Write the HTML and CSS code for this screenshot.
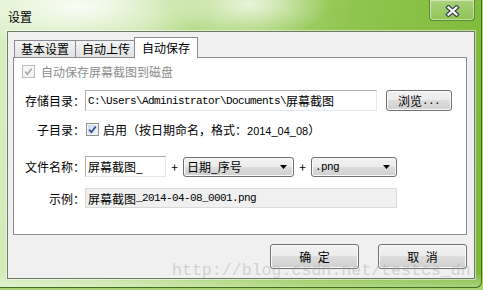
FILE: index.html
```html
<!DOCTYPE html>
<html lang="zh-CN">
<head>
    <meta charset="UTF-8">
    <title>设置</title>
    <link rel="stylesheet" href="styles.css">
</head>
<body>

    <div class="window">
        <div class="titlebar">
            <span class="title">设置</span>
            <div class="close">
                <svg width="15" height="12" viewBox="0 0 15 12">
                    <path d="M3.5 2.5 L11.5 9.5 M11.5 2.5 L3.5 9.5" stroke="#3c4a4f" stroke-width="4.6" stroke-linecap="square" fill="none"/>
                    <path d="M3.5 2.5 L11.5 9.5 M11.5 2.5 L3.5 9.5" stroke="#ffffff" stroke-width="2.2" stroke-linecap="square" fill="none"/>
                </svg>
            </div>
        </div>

        <div class="client">
            <div class="tabs">
                <div class="tab">基本设置</div>
                <div class="tab">自动上传</div>
                <div class="tab active">自动保存</div>
            </div>

            <div class="panel">
                <div class="row row-check disabled">
                    <span class="check">
                        <svg width="9" height="9" viewBox="0 0 9 9"><path d="M1.2 4.6 L3.4 7.2 L7.8 1.4" stroke="#a9a9a9" stroke-width="1.6" fill="none"/></svg>
                    </span>
                    <span>自动保存屏幕截图到磁盘</span>
                </div>

                <div class="row row-dir">
                    <span class="label">存储目录：</span>
                    <div class="field path"><span class="mono">C:\Users\Administrator\Documents\</span>屏幕截图</div>
                    <div class="btn browse">浏览<span class="mono">...</span></div>
                </div>

                <div class="row row-sub">
                    <span class="label">子目录：</span>
                    <span class="check on">
                        <svg width="9" height="9" viewBox="0 0 9 9"><path d="M1.2 4.6 L3.4 7.2 L7.8 1.4" stroke="#2b4c96" stroke-width="1.7" fill="none"/></svg>
                    </span>
                    <span class="sub-text">启用（按日期命名，格式：<span class="num">2014_04_08</span>）</span>
                </div>

                <div class="row row-name">
                    <span class="label">文件名称：</span>
                    <div class="field name">屏幕截图_</div>
                    <span class="plus">+</span>
                    <div class="combo date">
                        <span>日期_序号</span>
                        <svg class="arrow" width="7" height="4" viewBox="0 0 7 4"><polygon points="0,0 7,0 3.5,4" fill="#000"/></svg>
                    </div>
                    <span class="plus">+</span>
                    <div class="combo ext">
                        <span class="mono">.png</span>
                        <svg class="arrow" width="7" height="4" viewBox="0 0 7 4"><polygon points="0,0 7,0 3.5,4" fill="#000"/></svg>
                    </div>
                </div>

                <div class="row row-example">
                    <span class="label">示例：</span>
                    <div class="field example">屏幕截图<span class="mono">_2014-04-08_0001.png</span></div>
                </div>
            </div>

            <div class="actions">
                <div class="btn wide">确 定</div>
                <div class="btn wide">取 消</div>
            </div>
        </div>

        <div class="watermark">http://blog.csdn.net/testcs_dn</div>
    </div>

</body>
</html>
```

FILE: styles.css
```css
html, body {
    margin: 0;
    padding: 0;
}

body {
    width: 483px;
    height: 290px;
    overflow: hidden;
    background: #a9d36f;
    font-family: "Noto Sans CJK SC", sans-serif;
    font-size: 12px;
    color: #000000;
}

.window {
    position: relative;
    width: 482px;
    height: 288px;
    box-sizing: border-box;
    border-right: 1px solid #41701f;
    border-bottom: 1px solid #41701f;
    border-bottom-right-radius: 6px;
    background:
        radial-gradient(ellipse 130px 45px at 80px 6px, rgba(255, 255, 255, 0.9), rgba(255, 255, 255, 0)),
        radial-gradient(ellipse 80px 35px at 250px 4px, rgba(255, 255, 255, 0.75), rgba(255, 255, 255, 0)),
        linear-gradient(180deg, rgba(255, 255, 255, 0) 272px, rgba(255, 255, 255, 0.35) 287px),
        linear-gradient(100deg, #d9efc4 0%, #c4e3a0 28%, #a9d474 48%, #8ec54d 68%, #7db838 100%);
}

.titlebar {
    height: 31px;
    display: flex;
}

.title {
    padding: 11px 0 0 8px;
    line-height: 12px;
    height: 12px;
}

.close {
    margin-left: auto;
    margin-right: 6px;
    width: 46px;
    height: 21px;
    box-sizing: border-box;
    padding-top: 2px;
    border: 1px solid #5a8b33;
    border-top: none;
    border-radius: 0 0 4px 4px;
    background: linear-gradient(rgba(255, 255, 255, 0.3), rgba(255, 255, 255, 0.1));
    box-shadow: inset 0 0 0 1px rgba(255, 255, 255, 0.45);
    display: flex;
    align-items: center;
    justify-content: center;
}

.client {
    margin-left: 7px;
    width: 468px;
    height: 248px;
    box-sizing: border-box;
    border: 1px solid #6d7b64;
    box-shadow: 0 0 0 1px rgba(255, 255, 255, 0.5);
    background: #f0f0f0;
    padding: 5px 0 0 5px;
}

/* tabs */
.tabs {
    display: flex;
    align-items: flex-end;
    height: 20px;
    padding-left: 1px;
    position: relative;
    z-index: 1;
}

.tab {
    width: 62px;
    height: 17px;
    box-sizing: border-box;
    border: 1px solid #898c95;
    border-bottom: none;
    background: linear-gradient(#f3f3f3, #e2e2e2);
    text-align: center;
    line-height: 16px;
}

.tab + .tab {
    margin-left: -1px;
}

.tab.active {
    width: 64px;
    height: 21px;
    margin-left: -3px;
    margin-bottom: -1px;
    background: #ffffff;
    line-height: 19px;
    position: relative;
}

.panel {
    width: 454px;
    height: 178px;
    box-sizing: border-box;
    border: 1px solid #898c95;
    background: #ffffff;
    padding-top: 4px;
}

/* rows */
.row {
    display: flex;
    align-items: center;
}

.label {
    width: 71px;
    flex: none;
    text-align: right;
}

.row-check {
    height: 18px;
    padding-left: 8px;
}

.row-check .check {
    margin-right: 6px;
}

.disabled {
    color: #8d8d8d;
}

.row-dir {
    height: 21px;
    margin-top: 10px;
}

.row-sub {
    height: 14px;
    margin-top: 11px;
}

.row-name {
    height: 21px;
    margin-top: 20px;
}

.row-example {
    height: 20px;
    margin-top: 11px;
}

.mono {
    font-family: "Liberation Mono", monospace;
    font-size: 11px;
    letter-spacing: -0.6px;
}

.num {
    font-family: "Liberation Sans", sans-serif;
    font-size: 11px;
}

.check {
    width: 13px;
    height: 13px;
    flex: none;
    box-sizing: border-box;
    border: 1px solid #bcbcbc;
    background: #f5f5f5;
    display: flex;
    align-items: center;
    justify-content: center;
}

.check.on {
    margin-left: 1px;
    margin-right: 4px;
    border-color: #8e8f8f;
    background: linear-gradient(135deg, #cbd6e8, #f3f6fa);
    box-shadow: inset 0 0 0 1px #f4f4f4;
}

.field {
    height: 21px;
    box-sizing: border-box;
    border: 1px solid;
    border-color: #abadb3 #e3e9ef #e3e9ef #abadb3;
    background: #ffffff;
    padding-left: 2px;
    display: flex;
    align-items: center;
    white-space: nowrap;
    overflow: hidden;
}

.path {
    width: 292px;
}

.name {
    width: 81px;
}

.example {
    width: 312px;
    height: 20px;
    border: 1px solid #dadada;
    background: #f0f0f0;
}

.plus {
    width: 17px;
    flex: none;
    text-align: center;
}

.combo {
    height: 20px;
    box-sizing: border-box;
    border: 1px solid #707070;
    border-radius: 3px;
    background: linear-gradient(#f2f2f2 0%, #ebebeb 50%, #dddddd 50%, #cfcfcf 100%);
    box-shadow: inset 0 0 0 1px #fbfbfb;
    padding-left: 3px;
    display: flex;
    align-items: center;
}

.combo .arrow {
    margin-left: auto;
    margin-right: 6px;
}

.date {
    width: 111px;
}

.ext {
    width: 86px;
}

/* buttons */
.btn {
    height: 21px;
    box-sizing: border-box;
    border: 1px solid #707070;
    border-radius: 3px;
    background: linear-gradient(#f2f2f2 0%, #ebebeb 50%, #dddddd 50%, #cfcfcf 100%);
    box-shadow: inset 0 0 0 1px #fbfbfb;
    display: flex;
    align-items: center;
    justify-content: center;
}

.browse {
    width: 66px;
    margin-left: 9px;
}

.actions {
    width: 454px;
    margin-top: 9px;
    display: flex;
    justify-content: flex-end;
    gap: 19px;
}

.btn.wide {
    width: 89px;
    height: 25px;
    line-height: 14px;
    word-spacing: 4px;
}

.watermark {
    position: absolute;
    left: 172px;
    top: 267px;
    font-family: "Liberation Mono", monospace;
    font-size: 16.6px;
    line-height: 8px;
    color: rgba(170, 170, 170, 0.45);
    white-space: nowrap;
    pointer-events: none;
}
```
